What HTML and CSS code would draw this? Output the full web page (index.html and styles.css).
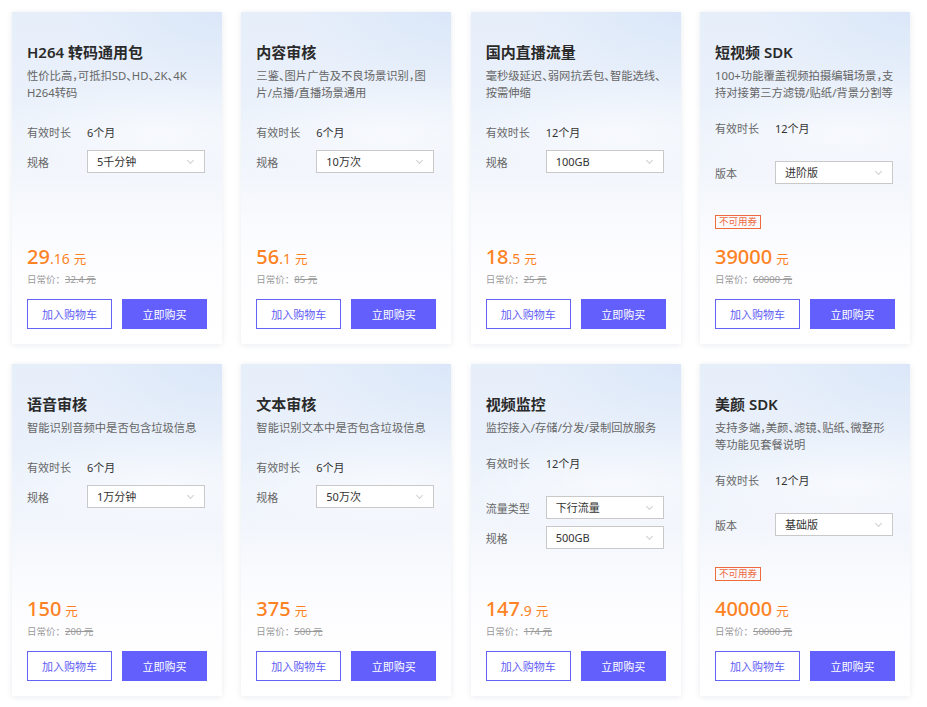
FILE: index.html
```html
<!DOCTYPE html>
<html lang="zh-CN">
<head>
<meta charset="utf-8">
<title>套餐</title>
<link rel="stylesheet" href="styles.css">
</head>
<body>
<div class="grid">

  <div class="card">
    <h3 class="title">H264 转码通用包</h3>
    <p class="desc">性价比高，可抵扣SD、HD、2K、4K<br>H264转码</p>
    <div class="specs">
      <div class="row"><span class="label">有效时长</span><span class="value">6个月</span></div>
      <div class="row"><span class="label">规格</span><span class="select">5千分钟<i class="chev"></i></span></div>
    </div>
    <div class="bottom">
      <div class="price"><span class="int">29</span><span class="dec">.16</span><span class="unit">元</span></div>
      <div class="orig">日常价：<s>32.4 元</s></div>
      <div class="btns"><button class="btn outline">加入购物车</button><button class="btn primary">立即购买</button></div>
    </div>
  </div>

  <div class="card">
    <h3 class="title">内容审核</h3>
    <p class="desc">三鉴、图片广告及不良场景识别，图<br>片/点播/直播场景通用</p>
    <div class="specs">
      <div class="row"><span class="label">有效时长</span><span class="value">6个月</span></div>
      <div class="row"><span class="label">规格</span><span class="select">10万次<i class="chev"></i></span></div>
    </div>
    <div class="bottom">
      <div class="price"><span class="int">56</span><span class="dec">.1</span><span class="unit">元</span></div>
      <div class="orig">日常价：<s>85 元</s></div>
      <div class="btns"><button class="btn outline">加入购物车</button><button class="btn primary">立即购买</button></div>
    </div>
  </div>

  <div class="card">
    <h3 class="title">国内直播流量</h3>
    <p class="desc">毫秒级延迟、弱网抗丢包、智能选线、<br>按需伸缩</p>
    <div class="specs">
      <div class="row"><span class="label">有效时长</span><span class="value">12个月</span></div>
      <div class="row"><span class="label">规格</span><span class="select">100GB<i class="chev"></i></span></div>
    </div>
    <div class="bottom">
      <div class="price"><span class="int">18</span><span class="dec">.5</span><span class="unit">元</span></div>
      <div class="orig">日常价：<s>25 元</s></div>
      <div class="btns"><button class="btn outline">加入购物车</button><button class="btn primary">立即购买</button></div>
    </div>
  </div>

  <div class="card">
    <h3 class="title">短视频 SDK</h3>
    <p class="desc">100+功能覆盖视频拍摄编辑场景，支<br>持对接第三方滤镜/贴纸/背景分割等</p>
    <div class="specs wide">
      <div class="row"><span class="label">有效时长</span><span class="value">12个月</span></div>
      <div class="row"><span class="label">版本</span><span class="select">进阶版<i class="chev"></i></span></div>
    </div>
    <div class="bottom">
      <span class="tag">不可用券</span>
      <div class="price"><span class="int">39000</span><span class="unit">元</span></div>
      <div class="orig">日常价：<s>60000 元</s></div>
      <div class="btns"><button class="btn outline">加入购物车</button><button class="btn primary">立即购买</button></div>
    </div>
  </div>

  <div class="card">
    <h3 class="title">语音审核</h3>
    <p class="desc">智能识别音频中是否包含垃圾信息</p>
    <div class="specs">
      <div class="row"><span class="label">有效时长</span><span class="value">6个月</span></div>
      <div class="row"><span class="label">规格</span><span class="select">1万分钟<i class="chev"></i></span></div>
    </div>
    <div class="bottom">
      <div class="price"><span class="int">150</span><span class="unit">元</span></div>
      <div class="orig">日常价：<s>200 元</s></div>
      <div class="btns"><button class="btn outline">加入购物车</button><button class="btn primary">立即购买</button></div>
    </div>
  </div>

  <div class="card">
    <h3 class="title">文本审核</h3>
    <p class="desc">智能识别文本中是否包含垃圾信息</p>
    <div class="specs">
      <div class="row"><span class="label">有效时长</span><span class="value">6个月</span></div>
      <div class="row"><span class="label">规格</span><span class="select">50万次<i class="chev"></i></span></div>
    </div>
    <div class="bottom">
      <div class="price"><span class="int">375</span><span class="unit">元</span></div>
      <div class="orig">日常价：<s>500 元</s></div>
      <div class="btns"><button class="btn outline">加入购物车</button><button class="btn primary">立即购买</button></div>
    </div>
  </div>

  <div class="card">
    <h3 class="title">视频监控</h3>
    <p class="desc">监控接入/存储/分发/录制回放服务</p>
    <div class="specs wide">
      <div class="row"><span class="label">有效时长</span><span class="value">12个月</span></div>
      <div class="row"><span class="label">流量类型</span><span class="select">下行流量<i class="chev"></i></span></div>
      <div class="row"><span class="label">规格</span><span class="select">500GB<i class="chev"></i></span></div>
    </div>
    <div class="bottom">
      <div class="price"><span class="int">147</span><span class="dec">.9</span><span class="unit">元</span></div>
      <div class="orig">日常价：<s>174 元</s></div>
      <div class="btns"><button class="btn outline">加入购物车</button><button class="btn primary">立即购买</button></div>
    </div>
  </div>

  <div class="card">
    <h3 class="title">美颜 SDK</h3>
    <p class="desc">支持多端，美颜、滤镜、贴纸、微整形<br>等功能见套餐说明</p>
    <div class="specs wide">
      <div class="row"><span class="label">有效时长</span><span class="value">12个月</span></div>
      <div class="row"><span class="label">版本</span><span class="select">基础版<i class="chev"></i></span></div>
    </div>
    <div class="bottom">
      <span class="tag">不可用券</span>
      <div class="price"><span class="int">40000</span><span class="unit">元</span></div>
      <div class="orig">日常价：<s>50000 元</s></div>
      <div class="btns"><button class="btn outline">加入购物车</button><button class="btn primary">立即购买</button></div>
    </div>
  </div>

</div>
</body>
</html>
```

FILE: styles.css
```css
* { box-sizing: border-box; }

html, body {
  margin: 0;
  background: #fff;
}

body {
  padding: 12px;
  font-family: "Noto Sans", "Noto Sans CJK SC", sans-serif;
  color: #333;
}

.grid {
  display: grid;
  grid-template-columns: repeat(4, 210px);
  grid-auto-rows: 332px;
  column-gap: 19.33px;
  row-gap: 20px;
}

.card {
  display: flex;
  flex-direction: column;
  padding: 29px 15px 15px 15px;
  background:
    radial-gradient(ellipse 120% 22% at 70% 36%, rgba(255,255,255,0.55), rgba(255,255,255,0) 70%),
    radial-gradient(ellipse 90% 30% at 100% 0%, rgba(214,228,248,0.7), rgba(214,228,248,0) 80%),
    linear-gradient(180deg, #e6eefa 0%, #eaf1fb 28%, #f1f5fc 46%, #f8fafd 62%, #fdfdff 74%, #fff 100%);
  box-shadow: 0 1px 6px rgba(40, 60, 100, 0.10);
}

.title {
  margin: 0;
  font-size: 15px;
  line-height: 22px;
  font-weight: 600;
  color: #2a2a2a;
  font-family: "Noto Sans", "Noto Sans CJK SC", sans-serif;
}

.desc {
  margin: 4px 0 0 0;
  font-size: 11.3px;
  line-height: 17px;
  color: #666;
  font-feature-settings: "halt" 1;
  white-space: nowrap;
}

.specs {
  display: flex;
  flex-direction: column;
  gap: 7px;
  margin-top: 19px;
}

.specs.wide {
  margin-top: 15px;
}

.specs.wide .row:first-child {
  margin-bottom: 15px;
}

.row {
  display: flex;
  align-items: center;
  height: 23px;
  font-size: 11px;
}

.label {
  width: 60px;
  color: #666;
}

.value {
  color: #333;
}

.select {
  position: relative;
  width: 118px;
  height: 23px;
  line-height: 21px;
  padding-left: 9px;
  border: 1px solid #c9c9c9;
  background: #fff;
  color: #333;
}

.chev {
  position: absolute;
  right: 11px;
  top: 7px;
  width: 5px;
  height: 5px;
  border-right: 1px solid #d0d0d0;
  border-bottom: 1px solid #d0d0d0;
  transform: rotate(45deg);
}

.bottom {
  margin-top: auto;
  display: flex;
  flex-direction: column;
  align-items: flex-start;
}

.tag {
  display: inline-block;
  height: 14px;
  line-height: 12px;
  padding: 0 3px;
  margin-bottom: 15px;
  font-size: 9.5px;
  color: #ef6a3e;
  border: 1px solid #ef6a3e;
}

.price {
  height: 26px;
  line-height: 26px;
  color: #fd8224;
  white-space: nowrap;
}

.price .int {
  font-size: 20px;
  font-weight: 500;
}

.price .dec {
  font-size: 14px;
}

.price .unit {
  font-size: 12.5px;
  margin-left: 4px;
}

.orig {
  margin-top: 3px;
  height: 14px;
  line-height: 14px;
  font-size: 9.5px;
  color: #999;
}

.orig s {
  color: #9a9a9a;
}

.btns {
  margin-top: 12px;
  display: flex;
  gap: 10px;
  width: 100%;
}

.btn {
  flex: 1;
  height: 30px;
  font-size: 11px;
  font-family: "Noto Sans", "Noto Sans CJK SC", sans-serif;
  cursor: pointer;
  padding: 0;
}

.btn.outline {
  background: #fff;
  color: #5f5cf6;
  border: 1px solid #6563f5;
}

.btn.primary {
  background: #625ffd;
  color: #fff;
  border: 1px solid #625ffd;
}
```
